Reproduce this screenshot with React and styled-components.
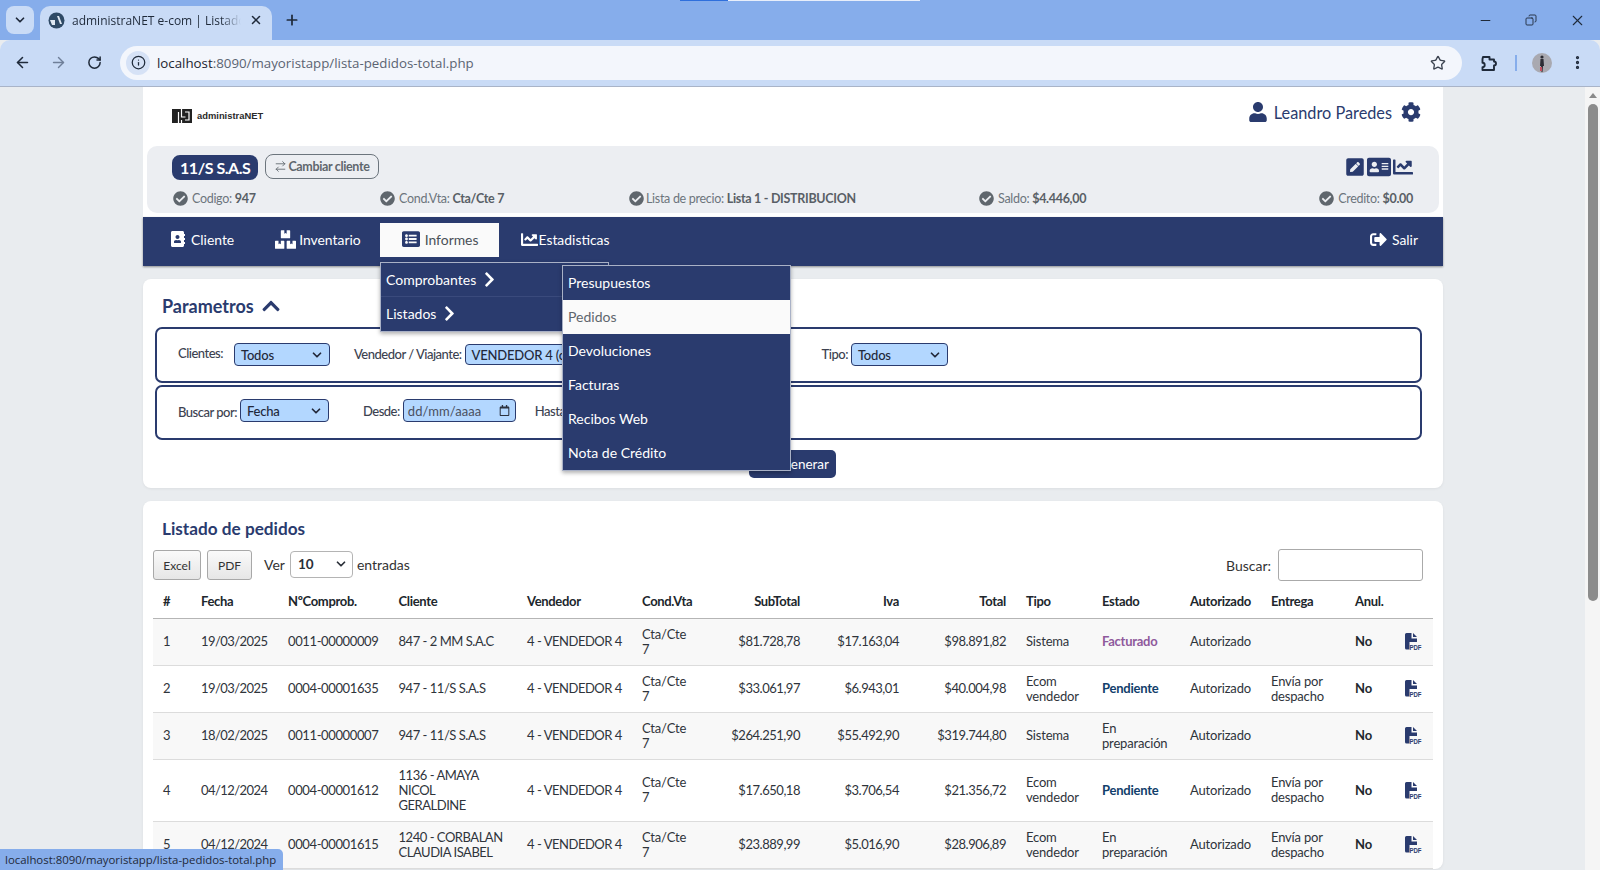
import React from "react";
import styled, { createGlobalStyle } from "styled-components";
import {
  FaUser, FaCog, FaPenSquare, FaAddressCard, FaChartLine, FaCheckCircle,
  FaAddressBook, FaBoxes, FaListAlt, FaSignOutAlt, FaChevronRight, FaChevronUp, FaRegCalendar
} from "react-icons/fa";
import { ArrowLeft, ArrowRight, ArrowRightLeft, RotateCw, Info, Star, EllipsisVertical, ChevronDown, X, Plus, Minus, Copy } from "lucide-react";

const navy = "#2a3b6e";

const Global = createGlobalStyle`
  html, body { margin: 0; padding: 0; height: 870px; overflow: hidden; background: #e9ecef; }
  body { font-family: Lato, "Open Sans", sans-serif; color: #212529; }
  * { box-sizing: border-box; }
`;

const Window = styled.div`
  width: 1600px; height: 870px; display: flex; flex-direction: column; position: relative; overflow: hidden;
`;
const TabStrip = styled.div`
  height: 40px; background: #86adeb; display: flex; align-items: flex-start; padding: 6px 0 0 6px; flex: none;
`;
const TabMenu = styled.div`
  width: 28px; height: 28px; border-radius: 8px; background: #c9dbf6; display: flex; align-items: center; justify-content: center; color: #1f2a3a;
`;
const Tab = styled.div`
  width: 232px; height: 34px; margin-left: 6px; background: #c9dbf6; border-radius: 10px 10px 0 0; display: flex; align-items: center; padding: 0 9px 6px 8px; font: 12px "Open Sans", sans-serif; color: #1f2a3a;
`;
const Favicon = styled.svg`
  width: 17px; height: 17px; margin-right: 7px; flex: none;
`;
const TabTitle = styled.span`
  flex: 1; overflow: hidden; white-space: nowrap; mask-image: linear-gradient(90deg, #000 88%, transparent 100%);
`;
const NewTab = styled.div`
  margin: 6px 0 0 12px; color: #1f2a3a; display: flex;
`;
const WindowControls = styled.div`
  margin-left: auto; display: flex; align-items: center; height: 28px; color: #1f2a3a;
`;
const WindowButton = styled.div`
  width: 46px; display: flex; justify-content: center;
`;
const Toolbar = styled.div`
  height: 47px; background: #c9dbf6; border-bottom: 1px solid #a9b4c8; border-radius: 10px 10px 0 0; display: flex; align-items: center; padding: 0 12px 1px 12px; flex: none; color: #2b3442;
`;
const NavIcon = styled.div`
  width: 36px; display: flex; justify-content: center; color: ${p => p.$muted ? "#6f7f99" : "#1f2a3a"};
`;
const Omnibox = styled.div`
  width: 1342px; margin-left: 8px; height: 34px; border-radius: 17px; background: #f3f6fc; display: flex; align-items: center; padding: 0 16px 0 6px; font: 13.3px "Open Sans", sans-serif; color: #5b6472;
`;
const InfoChip = styled.div`
  width: 24px; height: 24px; border-radius: 50%; background: #d6e2f6; display: flex; align-items: center; justify-content: center; margin-right: 7px; color: #1f2a3a;
`;
const Host = styled.span`
  color: #1c2430;
`;
const BoxEnd = styled.div`
  margin-left: auto; display: flex; color: #3b4350;
`;
const ToolEnd = styled.div`
  display: flex; align-items: center; margin-left: 18px; color: #1f2a3a;
`;
const Divider = styled.div`
  width: 2px; height: 16px; background: #86adeb; margin: 0 15px 0 17px;
`;
const Avatar = styled.svg`
  width: 20px; height: 20px; border-radius: 50%; margin-right: 17px;
`;
const Viewport = styled.div`
  flex: 1; display: flex; min-height: 0; background: #e9ecef;
`;
const PageArea = styled.div`
  flex: 1; min-width: 0; padding-left: 143px; overflow: hidden;
`;
const Scrollbar = styled.div`
  width: 15px; flex: none; background: #f5f5f5; display: flex; flex-direction: column; align-items: center; padding-top: 6px;
`;
const ScrollArrow = styled.div`
  width: 0; height: 0; border-left: 4.5px solid transparent; border-right: 4.5px solid transparent; border-bottom: 5px solid #8a8a8a;
`;
const ScrollThumb = styled.div`
  width: 10px; height: 497px; margin-top: 6px; border-radius: 5px; background: #8c8c8c;
`;
const Container = styled.div`
  width: 1300px;
`;
const Header = styled.header`
  height: 59px; background: #fff; display: flex; align-items: center; justify-content: space-between; padding: 0 22px 8px 29px;
`;
const Logo = styled.div`
  display: flex; align-items: center; gap: 5px; margin-top: 6px; font: 700 9.4px "Liberation Sans", Arial, sans-serif; color: #2a2a2a;
`;
const User = styled.div`
  display: flex; align-items: center; margin-bottom: 1px; font-size: 16.3px; color: ${navy};
`;
const UserName = styled.span`
  margin: 0 9px 0 6px;
`;
const ClientWrap = styled.div`
  background: #fff; padding: 0 4px 4px;
`;
const ClientPanel = styled.div`
  height: 67px; background: #eceef2; border-radius: 10px; padding: 7px 26px 0 25px;
`;
const ClientTop = styled.div`
  display: flex; align-items: center; height: 28px;
`;
const ClientBadge = styled.div`
  height: 25px; padding: 0 8px; border-radius: 8px; background: ${navy}; color: #fff; font-size: 16px; font-weight: 700; letter-spacing: -.45px; display: flex; align-items: center;
`;
const ChangeButton = styled.div`
  height: 25px; margin: -1px 0 0 7px; padding: 0 8px; border: 1px solid #6c757d; border-radius: 8px; color: #5f666d; font-size: 12.5px; font-weight: 700; letter-spacing: -.35px; display: flex; align-items: center; gap: 1px;
`;
const ClientActions = styled.div`
  margin-left: auto; display: flex; align-items: center; gap: 2px; color: ${navy};
`;
const ClientInfo = styled.div`
  display: grid; grid-template-columns: 207px 249px 350px 338px 1fr; margin: 10px 0 0 1px; font-size: 12.5px; color: #6c757d;
`;
const InfoItem = styled.div`
  display: flex; align-items: center; gap: ${p => p.$gap ?? 4}px; letter-spacing: -.3px; justify-content: ${p => p.$end ? "flex-end" : "flex-start"};
  svg { color: #5f666d; font-size: 15px; flex: none; }
  b { color: #595f66; }
`;
const NavBar = styled.nav`
  height: 49px; background: ${navy}; display: flex; align-items: flex-start; padding: 6px 25px 0 8px; box-shadow: 0 1px 2px rgba(0,0,0,.4); position: relative;
`;
const NavItem = styled.div`
  height: 34px; display: flex; align-items: center; gap: ${p => p.$gap ?? 4}px; padding: 0 ${p => p.$right ?? 20}px 2px ${p => p.$left ?? 20}px; font-size: 13.9px; background: ${p => p.$active ? "#fafafa" : "transparent"}; color: ${p => p.$active ? "#495057" : "#fff"};
  svg { color: ${p => p.$active ? navy : "#fff"}; }
  margin-left: ${p => p.$end ? "auto" : 0};
`;
const FirstMenu = styled.div`
  position: absolute; left: 237px; top: 45px; width: 229px; background: ${navy}; border: 1px solid #a9b1c6; z-index: 3; box-shadow: 0 2px 4px rgba(0,0,0,.3);
`;
const FirstItem = styled.div`
  height: 34px; display: flex; align-items: center; gap: 5px; padding: 0 5px ${p => p.$line ? 0 : 2}px; color: #fff; font-size: 14px; border-bottom: ${p => p.$line ? "1px solid #3a4a7c" : "none"};
  svg { font-size: 17px; }
`;
const SecondMenu = styled.div`
  position: absolute; left: 419px; top: 48px; width: 229px; background: ${navy}; border: 1px solid #a9b1c6; z-index: 4; box-shadow: 0 2px 4px rgba(0,0,0,.3);
`;
const SecondItem = styled.div`
  height: 34px; display: flex; align-items: center; padding: 0 5px 1px; font-size: 14px; background: ${p => p.$active ? "#fafafa" : "transparent"}; color: ${p => p.$active ? "#5f666d" : "#fff"};
`;
const Card = styled.section`
  background: #fff; border-radius: 8px; margin-top: ${p => p.$mt}px; padding: ${p => p.$pad};
  box-shadow: 0 1px 3px rgba(0,0,0,.06);
`;
const CardTitle = styled.h2`
  margin: 0; font-size: ${p => p.$size || 18}px; font-weight: 700; color: ${navy}; display: flex; align-items: center; gap: 7px; padding: ${p => p.$pt}px 0 0 ${p => p.$pl}px; height: ${p => p.$h}px;
  svg { font-size: 20px; }
`;
const Fieldset = styled.div`
  height: ${p => p.$h}px; margin-top: ${p => p.$mt || 0}px; border: 2px solid ${navy}; border-radius: 7px; display: flex; align-items: center; padding-left: 21px; font-size: 13px; color: #3c4250; letter-spacing: -.5px;
`;
const Label = styled.label`
  margin-left: ${p => p.$ml || 0}px; margin-right: ${p => p.$mr ?? 3}px; font-weight: 500; position: relative; top: ${p => p.$top || 0}px; white-space: nowrap;
`;
const FakeSelect = styled.div`
  width: ${p => p.$w}px; height: ${p => p.$h || 23}px; background: #b3d7ff; border: 1px solid ${navy}; border-radius: 4px; display: flex; align-items: center; justify-content: space-between; padding: 1px 5px 0 6px; font-size: 13px; font-weight: 500; letter-spacing: -.2px; color: #22283a; white-space: nowrap; overflow: hidden; flex: none; position: relative; top: ${p => p.$top || 0}px;
`;
const DateSelect = styled(FakeSelect)`
  font-weight: 400; letter-spacing: .1px; color: #4a5060; padding: 0 5px 0 4px;
  svg { color: #2c3240; }
`;
const ButtonRow = styled.div`
  display: flex; justify-content: flex-start; padding: 10px 0 0 594px;
`;
const GenerateButton = styled.div`
  width: 87px; height: 28px; background: ${navy}; border-radius: 5px; color: #fff; font-size: 13.5px; display: flex; align-items: center; justify-content: flex-end; padding: 0 7px 1px 0;
`;
const ListControls = styled.div`
  display: flex; align-items: center; height: 34px; margin-bottom: -2px; padding-bottom: 2px; font-size: 14px; color: #333;
`;
const ExportButton = styled.div`
  width: ${p => p.$w}px; height: 30px; margin: 2px ${p => p.$mr}px 0 0; border: 1px solid #a8a8a8; border-radius: 3px; background: linear-gradient(#fafafa, #e6e6e6); font-size: 12px; color: #333; display: flex; align-items: center; justify-content: center;
`;
const PageSelect = styled.div`
  width: 63px; height: 27px; border: 1px solid #b4b4b4; border-radius: 4px; margin: 0 4px 0 5px; display: flex; align-items: center; justify-content: space-between; padding: 0 4px 0 7px; font-weight: 700; font-size: 13.5px; color: #2a2f38;
`;
const SearchBox = styled.div`
  margin: 2px 10px 0 auto; display: flex; align-items: center; gap: 7px;
`;
const SearchInput = styled.div`
  width: 145px; height: 32px; border: 1px solid #aaa; border-radius: 3px; background: #fff;
`;
const Table = styled.table`
  width: 1280px; table-layout: fixed; border-collapse: collapse; font-size: 13px; line-height: 15px; color: #2f343b; margin-top: 6px;
`;
const Th = styled.th`
  text-align: ${p => p.$right ? "right" : "left"}; padding: 0 10px; height: 32px; border-bottom: 1px solid #b5b5b5; font-weight: 700; color: #20262c; letter-spacing: -.32px;
`;
const Tr = styled.tr`
  background: ${p => p.$odd ? "#f8f8f8" : "#fff"};
`;
const Td = styled.td`
  text-align: ${p => p.$right ? "right" : "left"}; padding: 8px 10px; border-bottom: 1px solid #dcdcdc; vertical-align: middle; letter-spacing: ${p => p.$tight ?? -.18}px;
`;
const Status = styled.span`
  font-weight: 700; letter-spacing: -.25px; color: ${p => p.$c};
`;
const Strong = styled.span`
  font-weight: 700; color: #23282e;
`;
const ClientLine = styled.span`
  display: block;
`;
const PdfIcon = styled.svg`
  display: block; width: 16px; height: 17px; overflow: visible;
`;
const StatusBubble = styled.div`
  position: absolute; left: 0; bottom: 0; height: 21px; width: 283px; background: #86adeb; border-radius: 0 5px 0 0; font: 11.4px "Open Sans", sans-serif; white-space: nowrap; color: #1f2a3a; display: flex; align-items: center; padding-left: 5px; z-index: 6;
`;
const LoadBar = styled.div`
  position: absolute; top: 0; left: 680px; height: 1px; width: 240px; background: linear-gradient(90deg, #2f6fdc 20%, #e8eefa 20%);
`;

const Pdf = () => (
  <PdfIcon viewBox="0 0 16 17">
    <path d="M0 1.5Q0 0 1.5 0H6.5V5.5H12V9H4.5V16.5H1.5Q0 16.5 0 15Z" fill={navy} />
    <path d="M8 0L12 4H8Z" fill={navy} />
    <text x="4.6" y="16.6" fontSize="7.2" fontWeight="700" fontFamily="Liberation Sans" fill={navy} textLength="11.6" lengthAdjust="spacingAndGlyphs">PDF</text>
  </PdfIcon>
);

const Check = ({ label, value, gap, end }) => (
  <InfoItem $gap={gap} $end={end}><FaCheckCircle /><span>{label} <b>{value}</b></span></InfoItem>
);

const rows = [
  ["1","19/03/2025","0011-00000009",["847 - 2 MM S.A.C"],"$81.728,78","$17.163,04","$98.891,82","Sistema",["Facturado","#8f5a9c"],""],
  ["2","19/03/2025","0004-00001635",["947 - 11/S S.A.S"],"$33.061,97","$6.943,01","$40.004,98","Ecom vendedor",["Pendiente","#12406b"],"Envía por despacho"],
  ["3","18/02/2025","0011-00000007",["947 - 11/S S.A.S"],"$264.251,90","$55.492,90","$319.744,80","Sistema",["En preparación"],""],
  ["4","04/12/2024","0004-00001612",["1136 - AMAYA","NICOL","GERALDINE"],"$17.650,18","$3.706,54","$21.356,72","Ecom vendedor",["Pendiente","#12406b"],"Envía por despacho"],
  ["5","04/12/2024","0004-00001615",["1240 - CORBALAN","CLAUDIA ISABEL"],"$23.889,99","$5.016,90","$28.906,89","Ecom vendedor",["En preparación"],"Envía por despacho"],
];
const cols = [38,87,110.5,128.5,115,64,114,99,107,76,88,81,84,50,38];
const heads = [["#"],["Fecha"],["NºComprob."],["Cliente"],["Vendedor"],["Cond.Vta"],["SubTotal",1],["Iva",1],["Total",1],["Tipo"],["Estado"],["Autorizado"],["Entrega"],["Anul."],[""]];

export default function App() {
  return (
    <Window>
      <Global />
      <LoadBar />
      <TabStrip>
        <TabMenu><ChevronDown size={14} strokeWidth={3} /></TabMenu>
        <Tab>
          <Favicon viewBox="0 0 17 17">
            <circle cx="8.5" cy="8.5" r="8" fill="#2f4a66" />
            <path d="M2 8h5v5H4zM9 4h2l3 8h-2z" fill="#dfe8f2" />
          </Favicon>
          <TabTitle>administraNET e-com | Listado de pedidos</TabTitle>
          <X size={14} strokeWidth={2.6} style={{ marginLeft: 8 }} />
        </Tab>
        <NewTab><Plus size={16} strokeWidth={2.6} /></NewTab>
        <WindowControls>
          <WindowButton><Minus size={15} strokeWidth={1.6} /></WindowButton>
          <WindowButton><Copy size={12} strokeWidth={1.8} style={{ transform: "scaleX(-1)" }} /></WindowButton>
          <WindowButton><X size={17} strokeWidth={1.5} /></WindowButton>
        </WindowControls>
      </TabStrip>
      <Toolbar>
        <NavIcon style={{ marginLeft: -8 }}><ArrowLeft size={17} strokeWidth={2.2} /></NavIcon>
        <NavIcon $muted><ArrowRight size={17} strokeWidth={2} /></NavIcon>
        <NavIcon><RotateCw size={15} strokeWidth={2.4} /></NavIcon>
        <Omnibox>
          <InfoChip><Info size={15} strokeWidth={2} /></InfoChip>
          <Host>localhost</Host>:8090/mayoristapp/lista-pedidos-total.php
          <BoxEnd><Star size={16} strokeWidth={2} /></BoxEnd>
        </Omnibox>
        <ToolEnd>
          <svg width="18" height="18" viewBox="0 0 18 18" fill="none" stroke="currentColor" strokeWidth="1.9" strokeLinejoin="round">
            <path d="M3 3H9.5V5.5A1.6 1.6 0 0 0 9.5 5.5H14V7.5A1.9 1.9 0 0 1 14 11.5V16H2.5V13.2A2.2 2.2 0 0 0 2.5 8.8V5Z" />
          </svg>
          <Divider />
          <Avatar viewBox="0 0 20 20">
            <rect width="20" height="20" fill="#a9a9b0" />
            <circle cx="10" cy="4" r="1.6" fill="#2c2c34" />
            <path d="M8.5 6h3l.5 7h-1l-.5 6h-1l-.5-6h-1z" fill="#2c2c34" />
            <path d="M8 14h2v4H8z" fill="#c25060" />
          </Avatar>
          <EllipsisVertical size={17} strokeWidth={2.6} />
        </ToolEnd>
      </Toolbar>
      <Viewport>
        <PageArea>
          <Container>
            <Header>
              <Logo>
                <svg width="20" height="14" viewBox="0 0 20 14">
                  <path d="M0 0h20v14H0z" fill="#222" />
                  <path d="M6.5 3v11M9.5 0v8h4M9.5 11v3M13 11h4V3h-4" fill="none" stroke="#fff" strokeWidth="1.2" />
                </svg>
                administraNET
              </Logo>
              <User>
                <FaUser size={20} />
                <UserName>Leandro Paredes</UserName>
                <FaCog size={20} />
              </User>
            </Header>
            <ClientWrap>
              <ClientPanel>
                <ClientTop>
                  <ClientBadge>11/S S.A.S</ClientBadge>
                  <ChangeButton><ArrowRightLeft size={13} strokeWidth={1.6} />Cambiar cliente</ChangeButton>
                  <ClientActions>
                    <FaPenSquare size={20} />
                    <FaAddressCard size={24} />
                    <FaChartLine size={20} />
                  </ClientActions>
                </ClientTop>
                <ClientInfo>
                  <Check label="Codigo:" value="947" />
                  <Check label="Cond.Vta:" value="Cta/Cte 7" />
                  <Check label="Lista de precio:" value="Lista 1 - DISTRIBUCION" gap={2} />
                  <Check label="Saldo:" value="$4.446,00" />
                  <Check label="Credito:" value="$0.00" end />
                </ClientInfo>
              </ClientPanel>
            </ClientWrap>
            <NavBar>
              <NavItem $left={19} $gap={5}><FaAddressBook size={16} />Cliente</NavItem>
              <NavItem $left={21} $right={19} $gap={3}><FaBoxes size={21} />Inventario</NavItem>
              <NavItem $active $left={22} $right={21} $gap={5}><FaListAlt size={18} />Informes</NavItem>
              <NavItem $left={22} $gap={0}><FaChartLine size={17} />Estadisticas</NavItem>
              <NavItem $end $left={0} $right={0} $gap={5}><FaSignOutAlt size={17} />Salir</NavItem>
              <FirstMenu>
                <FirstItem $line>Comprobantes <FaChevronRight /></FirstItem>
                <FirstItem>Listados <FaChevronRight /></FirstItem>
              </FirstMenu>
              <SecondMenu>
                <SecondItem>Presupuestos</SecondItem>
                <SecondItem $active>Pedidos</SecondItem>
                <SecondItem>Devoluciones</SecondItem>
                <SecondItem>Facturas</SecondItem>
                <SecondItem>Recibos Web</SecondItem>
                <SecondItem>Nota de Crédito</SecondItem>
              </SecondMenu>
            </NavBar>
            <Card $mt={13} $pad="0 21px 10px 12px">
              <CardTitle $pl={7} $pt={6} $h={48}>Parametros <FaChevronUp /></CardTitle>
              <Fieldset $h={56}>
                <Label $mr={11} $top={-2}>Clientes:</Label>
                <FakeSelect $w={96} $top={-1}>Todos<ChevronDown size={14} strokeWidth={3} /></FakeSelect>
                <Label $ml={24} $top={-1}>Vendedor / Viajante:</Label>
                <FakeSelect $w={200} $h={21} $top={-1}>VENDEDOR 4 (cod.4)</FakeSelect>
                <Label $ml={157} $top={-1}>Tipo:</Label>
                <FakeSelect $w={97} $top={-1}>Todos<ChevronDown size={14} strokeWidth={3} /></FakeSelect>
              </Fieldset>
              <Fieldset $h={55} $mt={2}>
                <Label $top={-1}>Buscar por:</Label>
                <FakeSelect $w={89} $top={-2}>Fecha<ChevronDown size={14} strokeWidth={3} /></FakeSelect>
                <Label $ml={34} $top={-2}>Desde:</Label>
                <DateSelect $w={113} $top={-2}>dd/mm/aaaa<FaRegCalendar size={11} /></DateSelect>
                <Label $ml={19} $top={-2}>Hasta:</Label>
              </Fieldset>
              <ButtonRow><GenerateButton>Generar</GenerateButton></ButtonRow>
            </Card>
            <Card $mt={13} $pad="0 10px">
              <CardTitle $pl={9} $pt={8} $h={47} $size={17.2}>Listado de pedidos</CardTitle>
              <ListControls>
                <ExportButton $w={48} $mr={6}>Excel</ExportButton>
                <ExportButton $w={45} $mr={12}>PDF</ExportButton>
                Ver
                <PageSelect>10<ChevronDown size={14} strokeWidth={3} /></PageSelect>
                entradas
                <SearchBox>Buscar:<SearchInput /></SearchBox>
              </ListControls>
              <Table>
                <colgroup>{cols.map((w, i) => <col key={i} style={{ width: w }} />)}</colgroup>
                <thead>
                  <tr>{heads.map(([h, r], i) => <Th key={i} $right={r}>{h}</Th>)}</tr>
                </thead>
                <tbody>
                  {rows.map((r, i) => (
                    <Tr key={r[0]} $odd={i % 2 === 0}>
                      <Td>{r[0]}</Td>
                      <Td $tight={-.55}>{r[1]}</Td>
                      <Td $tight={-.38}>{r[2]}</Td>
                      <Td $tight={-.47}>{r[3].map(l => <ClientLine key={l}>{l}</ClientLine>)}</Td>
                      <Td $tight={-.47}>4 - VENDEDOR 4</Td>
                      <Td>Cta/Cte 7</Td>
                      <Td $right $tight={-.47}>{r[4]}</Td>
                      <Td $right $tight={-.47}>{r[5]}</Td>
                      <Td $right $tight={-.47}>{r[6]}</Td>
                      <Td>{r[7]}</Td>
                      <Td>{r[8][1] ? <Status $c={r[8][1]}>{r[8][0]}</Status> : r[8][0]}</Td>
                      <Td>Autorizado</Td>
                      <Td>{r[9]}</Td>
                      <Td><Strong>No</Strong></Td>
                      <Td><Pdf /></Td>
                    </Tr>
                  ))}
                </tbody>
              </Table>
            </Card>
          </Container>
        </PageArea>
        <Scrollbar>
          <ScrollArrow />
          <ScrollThumb />
        </Scrollbar>
      </Viewport>
      <StatusBubble>localhost:8090/mayoristapp/lista-pedidos-total.php</StatusBubble>
    </Window>
  );
}
